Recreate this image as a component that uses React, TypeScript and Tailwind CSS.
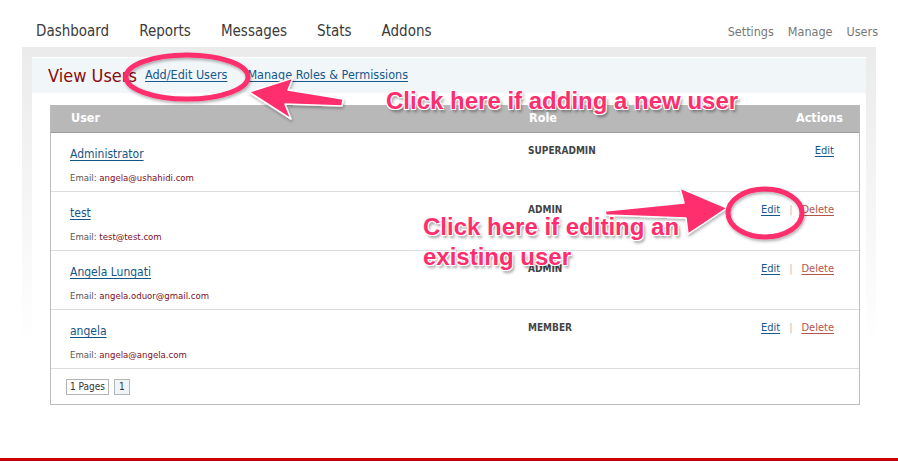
import { Fragment } from "react";

type User = {
  name: string;
  email: string;
  role: string;
  canDelete: boolean;
};

const users: User[] = [
  { name: "Administrator", email: "angela@ushahidi.com", role: "SUPERADMIN", canDelete: false },
  { name: "test", email: "test@test.com", role: "ADMIN", canDelete: true },
  { name: "Angela Lungati", email: "angela.oduor@gmail.com", role: "ADMIN", canDelete: true },
  { name: "angela", email: "angela@angela.com", role: "MEMBER", canDelete: true },
];

const mainTabs = ["Dashboard", "Reports", "Messages", "Stats", "Addons"];
const sideTabs = ["Settings", "Manage", "Users"];

function UserRow({ user }: { user: User }) {
  return (
    <div className="grid h-[59px] grid-cols-[477px_217px_1fr] border-b border-[#dcdcdc]">
      <div className="pl-[19px] pt-[13px]">
        <a href="#" className="block text-[12px] leading-[16px] text-[#135487] underline underline-offset-2">
          {user.name}
        </a>
        <p className="mt-[9px] text-[9.5px] leading-[14px] text-[#555]">
          Email: <span className="text-[#7d0f22]">{user.email}</span>
        </p>
      </div>
      <div className="pt-[11px] text-[10px] font-bold leading-[14px] text-[#444]">{user.role}</div>
      <div className="flex justify-end gap-[9px] pr-[25px] pt-[11px] text-[11px] leading-[14px]">
        <a href="#" className="text-[#17588c] underline underline-offset-2">
          Edit
        </a>
        {user.canDelete && (
          <Fragment>
            <span className="text-[#bbb]">|</span>
            <a href="#" className="text-[#b4554d] underline underline-offset-2">
              Delete
            </a>
          </Fragment>
        )}
      </div>
    </div>
  );
}

function Callouts() {
  const pink = "#ff2d6d";
  return (
    <div className="pointer-events-none absolute inset-0">
      <svg width="898" height="461" className="absolute left-0 top-0">
        <defs>
          <filter id="shade" x="-20%" y="-20%" width="140%" height="140%">
            <feDropShadow dx="1" dy="2" stdDeviation="1.5" floodColor="#000" floodOpacity="0.3" />
          </filter>
        </defs>
        <g filter="url(#shade)">
          <ellipse cx="187" cy="77" rx="61" ry="22" fill="none" stroke={pink} strokeWidth="5" />
          <path
            d="M249,92 L293,78 L288,90 L343,99 L342,106 L285,104 L291,119 Z"
            fill={pink}
            stroke="#fff"
            strokeWidth="1.5"
            strokeLinejoin="round"
          />
          <path
            d="M605,211 L684,203 L680,188 L727,208 L688,234 L686,218 L606,215 Z"
            fill={pink}
            stroke="#fff"
            strokeWidth="1.5"
            strokeLinejoin="round"
          />
          <ellipse cx="765" cy="213" rx="37" ry="24" fill="none" stroke={pink} strokeWidth="5" />
        </g>
      </svg>
      <p className="absolute left-[386px] top-[86px] whitespace-nowrap font-['Liberation_Sans',Arial,sans-serif] text-[24px] font-bold leading-[30px] text-[#ff2d6d] [text-shadow:-1px_-1px_0_#fff,1px_-1px_0_#fff,-1px_1px_0_#fff,1px_1px_0_#fff,2px_3px_3px_rgba(0,0,0,0.4)]">
        Click here if adding a new user
      </p>
      <p className="absolute left-[423px] top-[212px] whitespace-nowrap font-['Liberation_Sans',Arial,sans-serif] text-[24px] font-bold leading-[30px] text-[#ff2d6d] [text-shadow:-1px_-1px_0_#fff,1px_-1px_0_#fff,-1px_1px_0_#fff,1px_1px_0_#fff,2px_3px_3px_rgba(0,0,0,0.4)]">
        Click here if editing an
        <br />
        existing user
      </p>
    </div>
  );
}

export default function App() {
  return (
    <div className="relative flex h-[461px] w-[898px] flex-col overflow-hidden bg-white font-['DejaVu_Sans_Condensed','DejaVu_Sans',sans-serif] [font-stretch:semi-condensed]">
      <nav className="flex h-[47px] shrink-0 items-end justify-between pb-[7px] pl-[36px] pr-[20px]">
        <ul className="flex gap-[30px] text-[15px] leading-[18px] text-[#3a3a3a]">
          {mainTabs.map((tab) => (
            <li key={tab}>{tab}</li>
          ))}
        </ul>
        <ul className="flex gap-[14px] text-[12.5px] leading-[16px] text-[#777]">
          {sideTabs.map((tab) => (
            <li key={tab}>{tab}</li>
          ))}
        </ul>
      </nav>

      <main className="mx-[22px] bg-[linear-gradient(#ebebeb,#fff_300px)] px-[10px] pt-[10px]">
        <div className="bg-white pb-[15px]">
          <div className="flex h-[36px] items-center border-t border-white bg-[#f1f6f9] pl-[16px]">
            <h1 className="w-[97px] shrink-0 text-[18px] leading-[22px] text-[#8a0c0c]">View Users</h1>
            <a href="#" className="text-[12.5px] text-[#17588c] underline underline-offset-2">
              Add/Edit Users
            </a>
            <a href="#" className="ml-[20px] text-[12.5px] text-[#17588c] underline underline-offset-2">
              Manage Roles &amp; Permissions
            </a>
          </div>

          <section className="ml-[18px] mt-[12px] w-[810px] border border-t-0 border-[#bcbcbc]">
            <div className="grid h-[28px] grid-cols-[477px_217px_1fr] items-center border-b border-[#9a9a9a] bg-[#b8b8b8] text-[12.5px] font-bold text-white">
              <span className="pl-[20px]">User</span>
              <span className="pl-[1px]">Role</span>
              <span className="pr-[16px] text-right">Actions</span>
            </div>
            {users.map((user) => (
              <UserRow key={user.email} user={user} />
            ))}
            <div className="flex h-[35px] gap-[5px] pl-[15px] pt-[10px] text-[10px] leading-[14px] text-[#333]">
              <span className="h-[16px] border border-[#b5b5b5] px-[3px]">1 Pages</span>
              <span className="h-[16px] border border-[#b5b5b5] bg-[#eef4f8] px-[4px]">1</span>
            </div>
          </section>
        </div>
      </main>

      <footer className="mt-auto h-[3px] shrink-0 bg-[#cc0000]" />

      <Callouts />
    </div>
  );
}
